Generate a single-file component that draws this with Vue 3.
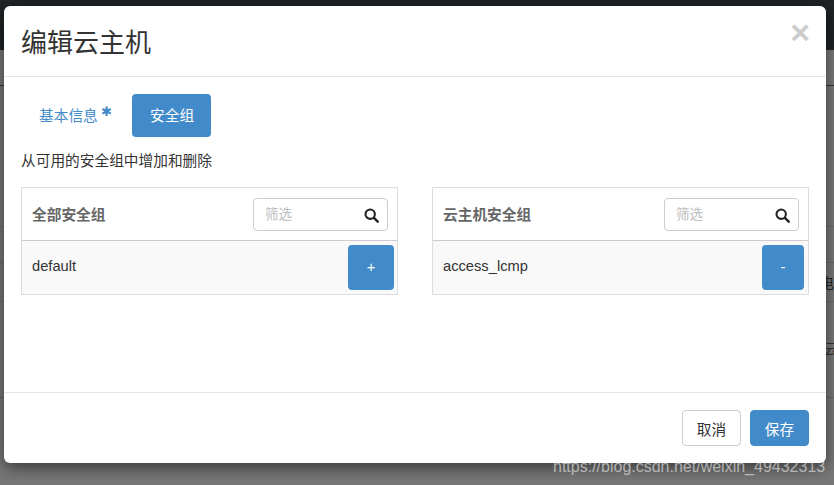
<template>
  <div class="page">
    <div class="topbar"></div>
    <div class="rows">
      <div class="row-line" style="top: 85px"></div>
      <div v-for="y in faintLines" :key="y" class="row-line faint" :style="{ top: y + 'px' }"></div>
      <span class="peek peek-a">电</span>
      <span class="peek peek-b">云</span>
    </div>
    <div class="modal">
      <div class="modal-header">
        <h3>编辑云主机</h3>
        <span class="close">×</span>
      </div>
      <div class="modal-body">
        <div class="tabs">
          <a class="tab">基本信息<span class="star">✱</span></a>
          <a class="tab active">安全组</a>
        </div>
        <p class="hint">从可用的安全组中增加和删除</p>
        <div class="columns">
          <div v-for="col in columns" :key="col.title" class="panel">
            <div class="panel-head">
              <strong>{{ col.title }}</strong>
              <div class="filter">
                <span class="placeholder">筛选</span>
                <svg width="15" height="15" viewBox="0 0 16 16">
                  <circle cx="6.6" cy="6.6" r="5" fill="none" stroke="#222" stroke-width="2.2" />
                  <path d="M10.6 10.6 L14.6 14.6" stroke="#222" stroke-width="2.6" stroke-linecap="round" />
                </svg>
              </div>
            </div>
            <div class="panel-row">
              <span>{{ col.item }}</span>
              <button class="row-btn" :class="col.btnClass">{{ col.sign }}</button>
            </div>
          </div>
        </div>
      </div>
      <div class="modal-footer">
        <button class="btn">取消</button>
        <button class="btn primary">保存</button>
      </div>
    </div>
    <div class="watermark">https://blog.csdn.net/weixin_49432313</div>
  </div>
</template>

<script setup>
const faintLines = [226, 262, 301, 397]

const columns = [
  { title: '全部安全组', item: 'default', sign: '+', btnClass: 'wide' },
  { title: '云主机安全组', item: 'access_lcmp', sign: '-', btnClass: 'narrow' }
]
</script>

<style>
html, body {
  margin: 0;
  overflow: hidden;
}
</style>

<style scoped>
.page {
  position: relative;
  width: 834px;
  height: 485px;
  background: #777;
  overflow: hidden;
  font-family: "Liberation Sans", "Noto Sans CJK SC", sans-serif;
  color: #333;
}

.topbar {
  height: 50px;
  background: #1f2325;
}

.row-line {
  position: absolute;
  left: 0;
  right: 0;
  height: 1px;
  background: #333;
}

.row-line.faint {
  background: #686868;
}

.peek {
  position: absolute;
  font-size: 14px;
  line-height: 16px;
  color: #222;
}

.peek-a { left: 820px; top: 275px; }
.peek-b { left: 824px; top: 341px; color: #333; }

.modal {
  position: absolute;
  left: 4px;
  top: 6px;
  width: 822px;
  height: 457px;
  background: #fff;
  border-radius: 6px;
  box-shadow: 0 5px 15px rgba(0, 0, 0, 0.5);
  display: flex;
  flex-direction: column;
}

.modal-header {
  height: 71px;
  box-sizing: border-box;
  border-bottom: 1px solid #e5e5e5;
  padding: 0 17px 2px;
  display: flex;
  align-items: center;
  justify-content: space-between;
  flex: none;
}

.modal-header h3 {
  margin: 0;
  font-size: 26px;
  font-weight: 400;
  color: #333;
}

.close {
  font-size: 34px;
  font-weight: 700;
  color: #ccc;
  line-height: 1;
  margin: -16px -1px 0 0;
}

.modal-body {
  flex: 1;
  padding: 17px 17px 0;
}

.tabs {
  display: flex;
  gap: 2px;
  height: 43px;
}

.tab {
  box-sizing: border-box;
  display: flex;
  align-items: center;
  padding: 0 18px 3px;
  font-size: 14.7px;
  color: #428bca;
  border-radius: 4px;
  width: 109px;
  white-space: nowrap;
}

.tab.active {
  width: 79px;
  padding-bottom: 2px;
  background: #428bca;
  color: #fff;
}

.star {
  font-size: 13px;
  margin: -6px 0 0 3px;
}

.hint {
  margin: 14px 0 0;
  font-size: 14.7px;
  line-height: 20px;
}

.columns {
  display: flex;
  gap: 34px;
  margin-top: 16px;
}

.panel {
  width: 377px;
  height: 108px;
  box-sizing: border-box;
  border: 1px solid #ddd;
}

.panel-head {
  height: 53px;
  box-sizing: border-box;
  border-bottom: 1px solid #ccc;
  display: flex;
  align-items: center;
  justify-content: space-between;
  padding: 0 9px 0 10px;
}

.panel-head strong {
  font-size: 14.7px;
  color: #666;
  margin-top: -2px;
}

.filter {
  width: 135px;
  height: 33px;
  box-sizing: border-box;
  border: 1px solid #ccc;
  border-radius: 4px;
  display: flex;
  align-items: center;
  justify-content: space-between;
  padding: 0 8px 0 11px;
}

.placeholder {
  font-size: 13.5px;
  color: #bbb;
  margin-top: -2px;
}

.filter svg {
  margin-top: 2px;
}

.panel-row {
  height: 53px;
  box-sizing: border-box;
  background: #f9f9f9;
  display: flex;
  align-items: center;
  justify-content: space-between;
  padding: 0 3px 0 10px;
  font-size: 14.7px;
  color: #333;
}

.panel-row span {
  margin-top: -3px;
}

.row-btn {
  height: 45px;
  border: 0;
  border-radius: 4px;
  background: #428bca;
  color: #fff;
  font-family: inherit;
  font-size: 14.7px;
  padding: 0 0 2px;
}

.row-btn.wide { width: 46px; }
.row-btn.narrow { width: 42px; margin-right: 1px; }

.modal-footer {
  height: 71px;
  box-sizing: border-box;
  border-top: 1px solid #e5e5e5;
  display: flex;
  align-items: center;
  justify-content: flex-end;
  gap: 9px;
  padding: 0 17px;
  flex: none;
}

.btn {
  width: 59px;
  height: 36px;
  box-sizing: border-box;
  border: 1px solid #ccc;
  border-radius: 4px;
  background: #fff;
  color: #333;
  font-family: inherit;
  font-size: 14.7px;
  padding: 0;
}

.btn.primary {
  background: #428bca;
  border-color: #428bca;
  color: #fff;
}

.watermark {
  position: absolute;
  left: 553px;
  top: 458px;
  font-size: 16px;
  color: rgba(255, 255, 255, 0.55);
  white-space: nowrap;
}
</style>
